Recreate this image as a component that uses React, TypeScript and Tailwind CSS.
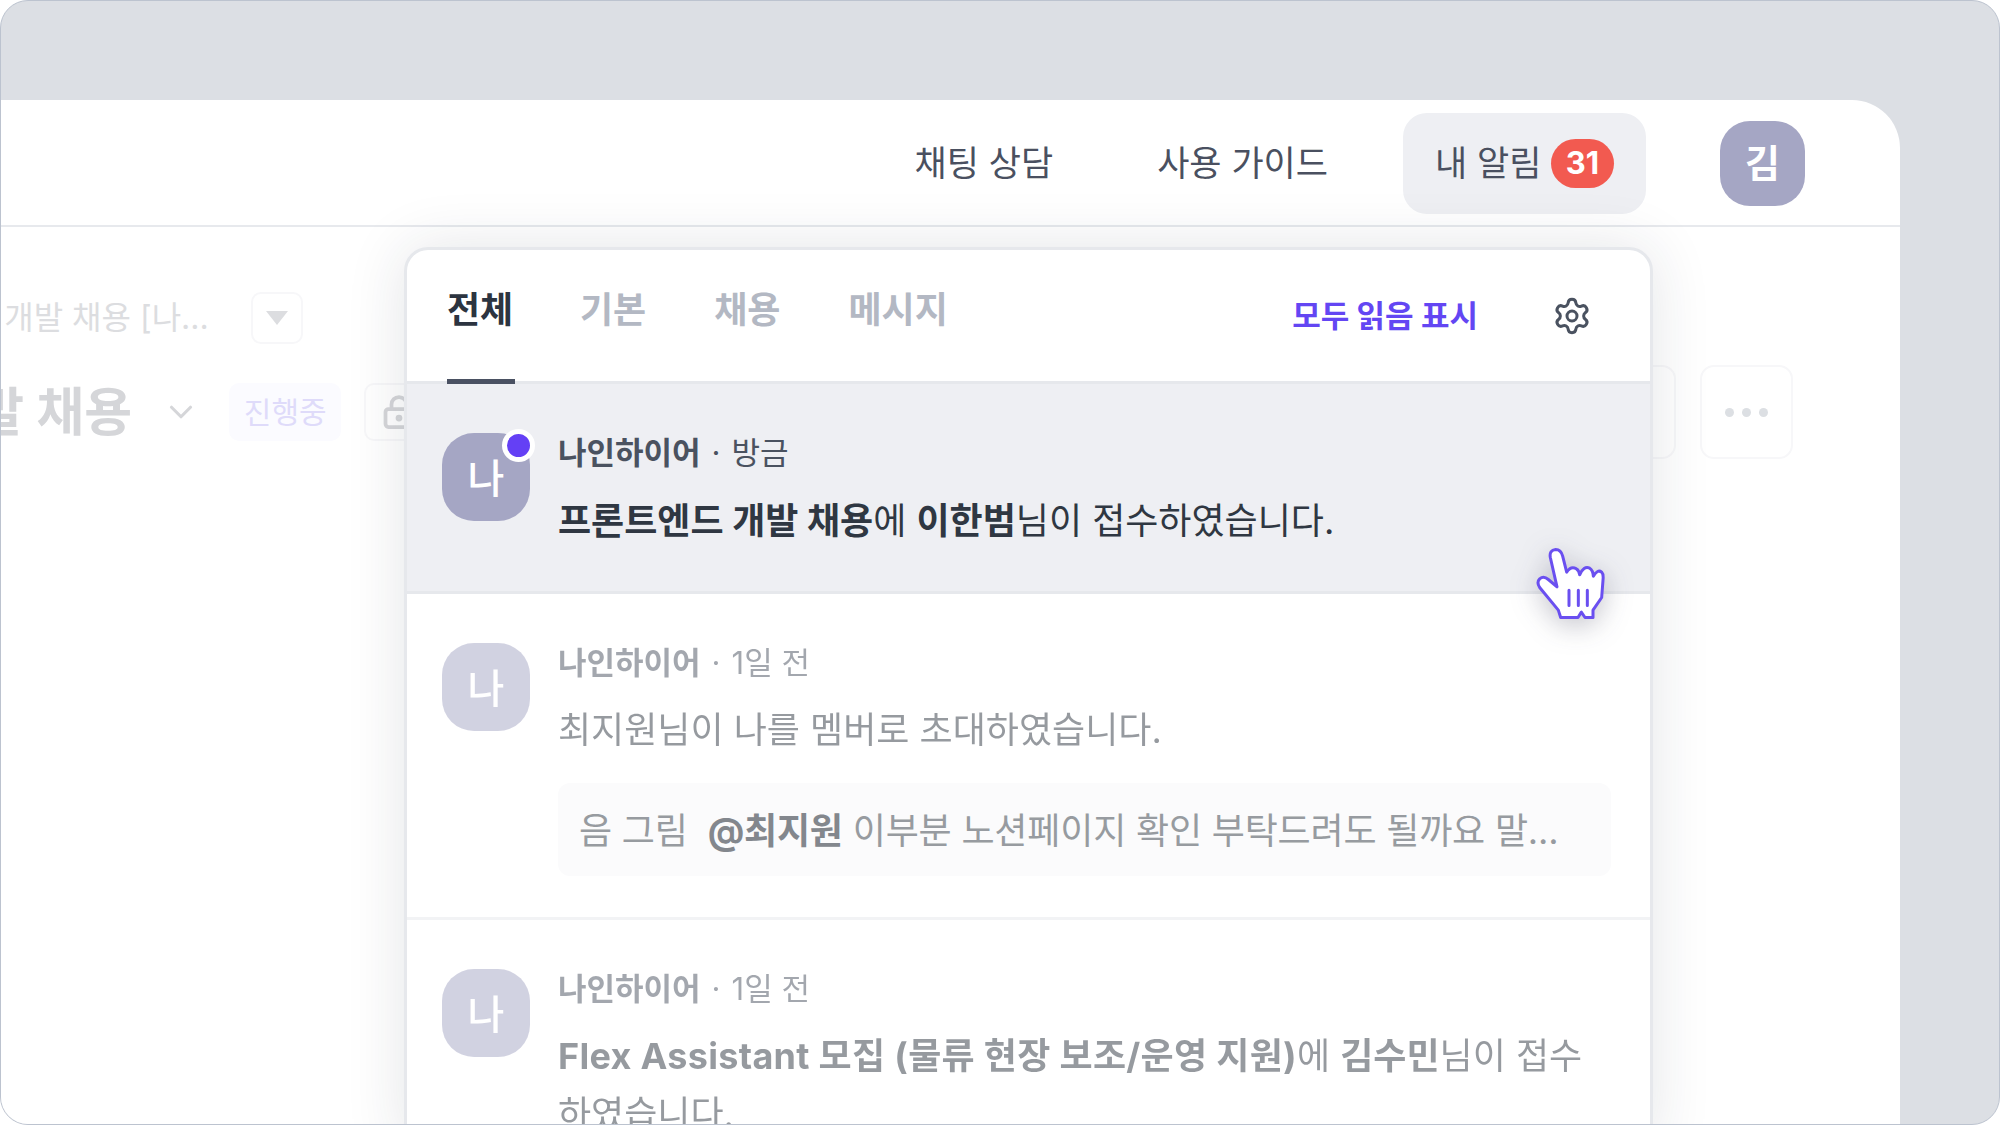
import { ChevronDown, LockKeyhole, Settings } from 'lucide-react';
import type { ReactNode } from 'react';

const Avatar = ({ dot }: { dot?: boolean }) => (
  <div className="relative flex h-[88px] w-[88px] shrink-0 items-center justify-center rounded-[32px] bg-[#a5a6c4] pt-[3px] text-[40px] font-medium text-white">
    나
    {dot && <span className="absolute top-[-4px] right-[-5px] h-[33px] w-[33px] rounded-full border-[5px] border-white bg-[#6440f5]" />}
  </div>
);

const Row = ({ time, faded, dot, children }: { time: string; faded?: boolean; dot?: boolean; children: ReactNode }) => (
  <div className={`flex gap-[28px] ${faded ? 'opacity-50' : ''}`}>
    <Avatar dot={dot} />
    <div className="min-w-0 flex-1">
      <div className="flex items-center text-[31px] leading-[40px] text-[#4a5260]">
        <span className="font-semibold">나인하이어</span>
        <span className="mx-[11px]">·</span>
        <span>{time}</span>
      </div>
      {children}
    </div>
  </div>
);

const Hand = () => (
  <svg viewBox="160 105 222 230" className="absolute top-[295px] left-[1126px] h-[77px] w-[74px] drop-shadow-[0_6px_14px_rgba(40,40,70,0.28)]">
    <path
      d="M243 322 L236 300 L180 232 Q170 216 180 206 Q192 196 206 208 L232 230 L212 142 Q208 120 228 118 Q244 118 249 138 L261 186 Q274 166 290 176 Q298 180 300 194 Q312 166 330 174 Q340 180 341 198 Q354 176 366 186 Q372 192 370 210 L366 262 L340 300 L340 322 L316 322 L305 306 L295 322 Z"
      fill="#fff"
      stroke="#6a4ff0"
      strokeWidth="9"
      strokeLinejoin="round"
    />
    <path d="M268 240V286M296 240V286M323 240V286" stroke="#6a4ff0" strokeWidth="9" strokeLinecap="round" />
  </svg>
);

const Popover = () => (
  <div className="absolute top-[147px] left-[403px] h-[900px] w-[1249px] rounded-t-[24px] border-[3px] border-[#e6e8ec] bg-white shadow-[0_0_60px_rgba(30,40,60,0.12)]">
    <div className="flex h-[134px] items-center border-b-[3px] border-[#e6e8ec] pr-[58px] pl-[40px]">
      <div className="flex h-full gap-[68px] text-[36px] font-bold whitespace-nowrap text-[#b3b8c3]">
        <div className="relative flex w-[65px] items-center pb-[11px] text-[#2c3440]">
          전체
          <span className="absolute bottom-[-3px] left-0 h-[5px] w-[68px] bg-[#4a5162]" />
        </div>
        <div className="flex items-center pb-[11px]">기본</div>
        <div className="flex items-center pb-[11px]">채용</div>
        <div className="flex items-center pb-[11px]">메시지</div>
      </div>
      <div className="ml-auto pt-[2px] text-[31px] font-bold text-[#6346f3]">모두 읽음 표시</div>
      <Settings size={40} strokeWidth={1.8} className="ml-[74px] text-[#4a5260]" />
    </div>

    <div className="h-[210px] border-b-[3px] border-[#e6e8ec] bg-[#eeeff3] px-[35px] pt-[49px]">
      <Row time="방금" dot>
        <p className="mt-[19px] text-[36px] leading-[58px] text-[#2f3742]">
          <b>프론트엔드 개발 채용</b>에 <b>이한범</b>님이 접수하였습니다.
        </p>
      </Row>
    </div>

    <div className="h-[326px] border-b-[3px] border-[#f2f3f5] px-[35px] pt-[49px] pr-[39px]">
      <Row time="1일 전" faded>
        <p className="mt-[18px] text-[36px] leading-[58px] text-[#2f3742]">최지원님이 나를 멤버로 초대하였습니다.</p>
      </Row>
      <div className="mt-[24px] ml-[116px] flex h-[93px] items-center rounded-[12px] bg-[#fbfbfc] pt-[2px] pl-[21px] text-[36px] tracking-[-0.2px] whitespace-nowrap text-[#979ba0]">
        음 그림&nbsp; <b className="mx-[10px] text-[#83878d]">@최지원</b>이부분 노션페이지 확인 부탁드려도 될까요 말...
      </div>
    </div>

    <div className="pt-[49px] pr-[50px] pl-[35px]">
      <Row time="1일 전" faded>
        <p className="mt-[18px] text-[36px] leading-[58px] text-[#2f3742]">
          <b className="tracking-[0.3px]">Flex Assistant 모집 (물류 현장 보조/운영 지원)</b>에 <b>김수민</b>님이 접수하였습니다.
        </p>
      </Row>
    </div>
    <Hand />
  </div>
);

const Backdrop = () => (
  <div className="pt-[65px]">
    <div className="flex h-[52px] items-center gap-[42px] pl-[5px] text-[#dcdde0]">
      <span className="ml-[-158px] text-[32px] whitespace-nowrap">프론트엔드 개발 채용 [나...</span>
      <div className="flex h-[52px] w-[52px] items-center justify-center rounded-[10px] border-2 border-[#f7f7f9]">
        <span className="h-0 w-0 border-x-[11px] border-t-[14px] border-x-transparent border-t-[#dcdde0]" />
      </div>
    </div>
    <div className="mt-[21px] flex h-[94px] items-center">
      <span className="ml-[-324px] pt-[2px] text-[52px] font-bold whitespace-nowrap text-[#d5d6d9]">프론트엔드 개발 채용</span>
      <ChevronDown size={38} strokeWidth={2} className="ml-[30px] text-[#d5d6d9]" />
      <div className="ml-[29px] flex h-[58px] w-[112px] items-center justify-center rounded-[10px] bg-[#fbfbff] text-[30px] text-[#dfdbfa]">진행중</div>
      <div className="ml-[23px] flex h-[58px] w-[90px] items-center rounded-[10px] border-2 border-[#f7f7f9] pl-[15px]">
        <LockKeyhole size={36} strokeWidth={2.5} className="text-[#d5d6d9]" />
      </div>
      <div className="mr-[24px] ml-auto h-[94px] w-[60px] rounded-[14px] border-2 border-[#f7f7f9]" />
      <div className="mr-[107px] flex h-[94px] w-[93px] items-center justify-center gap-[8px] rounded-[14px] border-2 border-[#f7f7f9]">
        <span className="h-[9px] w-[9px] rounded-full bg-[#dcdfe3]" />
        <span className="h-[9px] w-[9px] rounded-full bg-[#dcdfe3]" />
        <span className="h-[9px] w-[9px] rounded-full bg-[#dcdfe3]" />
      </div>
    </div>
  </div>
);

export default function App() {
  return (
    <div className="h-[1125px] w-[2000px] overflow-hidden bg-white font-['Inter','Noto_Sans_CJK_KR',sans-serif]">
      <div className="flex h-full flex-col overflow-hidden rounded-[28px] border border-[#bcc3cf] bg-[#dcdfe4] pt-[99px] pr-[99px]">
        <div className="relative flex-1 rounded-tr-[48px] bg-white">
          <header className="flex h-[127px] items-center justify-end border-b-2 border-[#e7e9ed] pt-[2px] pr-[95px] text-[35px] text-[#4a5060]">
            <span>채팅 상담</span>
            <span className="ml-[104px]">사용 가이드</span>
            <div className="ml-[75px] flex h-[101px] w-[243px] items-center rounded-[24px] bg-[#eeeff3] pl-[32px]">
              <span>내 알림</span>
              <span className="mr-[32px] ml-auto flex h-[49px] w-[63px] items-center justify-center rounded-full bg-[#f25a50] text-[31px] font-bold text-white">31</span>
            </div>
            <div className="ml-[74px] flex h-[85px] w-[85px] items-center justify-center rounded-[30px] bg-[#a5a6c4] text-[38px] font-bold text-white">김</div>
          </header>
          <Backdrop />
          <Popover />
        </div>
      </div>
    </div>
  );
}
